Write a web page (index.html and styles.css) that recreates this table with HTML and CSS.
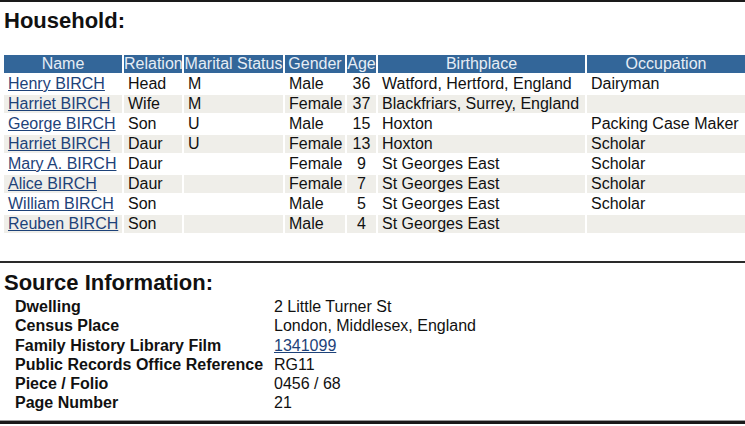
FILE: index.html
```html
<!DOCTYPE html>
<html>
<head>
<meta charset="utf-8">
<link rel="stylesheet" href="styles.css">
</head>
<body>
<div class="page">
  <div class="top-rule"></div>
  <h2 class="section-title">Household:</h2>
  <table class="household">
    <colgroup>
      <col class="c-name"><col class="c-rel"><col class="c-mar"><col class="c-gen"><col class="c-age"><col class="c-birth"><col class="c-occ">
    </colgroup>
    <thead>
      <tr><th>Name</th><th>Relation</th><th>Marital Status</th><th>Gender</th><th>Age</th><th>Birthplace</th><th>Occupation</th></tr>
    </thead>
    <tbody>
      <tr><td><a href="#">Henry BIRCH</a></td><td>Head</td><td>M</td><td>Male</td><td class="age">36</td><td>Watford, Hertford, England</td><td>Dairyman</td></tr>
      <tr class="alt"><td><a href="#">Harriet BIRCH</a></td><td>Wife</td><td>M</td><td>Female</td><td class="age">37</td><td>Blackfriars, Surrey, England</td><td></td></tr>
      <tr><td><a href="#">George BIRCH</a></td><td>Son</td><td>U</td><td>Male</td><td class="age">15</td><td>Hoxton</td><td>Packing Case Maker</td></tr>
      <tr class="alt"><td><a href="#">Harriet BIRCH</a></td><td>Daur</td><td>U</td><td>Female</td><td class="age">13</td><td>Hoxton</td><td>Scholar</td></tr>
      <tr><td><a href="#">Mary A. BIRCH</a></td><td>Daur</td><td></td><td>Female</td><td class="age">9</td><td>St Georges East</td><td>Scholar</td></tr>
      <tr class="alt"><td><a href="#">Alice BIRCH</a></td><td>Daur</td><td></td><td>Female</td><td class="age">7</td><td>St Georges East</td><td>Scholar</td></tr>
      <tr><td><a href="#">William BIRCH</a></td><td>Son</td><td></td><td>Male</td><td class="age">5</td><td>St Georges East</td><td>Scholar</td></tr>
      <tr class="alt"><td><a href="#">Reuben BIRCH</a></td><td>Son</td><td></td><td>Male</td><td class="age">4</td><td>St Georges East</td><td></td></tr>
    </tbody>
  </table>
  <div class="mid-rule"></div>
  <h2 class="section-title source-title">Source Information:</h2>
  <dl class="source">
    <dt>Dwelling</dt><dd>2 Little Turner St</dd>
    <dt>Census Place</dt><dd>London, Middlesex, England</dd>
    <dt>Family History Library Film</dt><dd><a href="#">1341099</a></dd>
    <dt>Public Records Office Reference</dt><dd>RG11</dd>
    <dt>Piece / Folio</dt><dd>0456 / 68</dd>
    <dt>Page Number</dt><dd>21</dd>
  </dl>
  <div class="bottom-rule"></div>
</div>
</body>
</html>
```

FILE: styles.css
```css
html, body {
  margin: 0;
  padding: 0;
  background: #ffffff;
  overflow: hidden;
}
body {
  font-family: "Liberation Sans", Arial, sans-serif;
  font-size: 16px;
  color: #111;
  width: 745px;
  height: 426px;
}
.page {
  width: 745px;
}
.top-rule {
  height: 2px;
  background: #1a1a1a;
}
.section-title {
  margin: 6px 0 0 4px;
  font-size: 22px;
  line-height: 26px;
  font-weight: bold;
  color: #111;
}
.household {
  margin: 19px 0 0 2px;
  width: 745px;
  table-layout: fixed;
  border-collapse: separate;
  border-spacing: 2px;
}
.c-name { width: 118px; }
.c-rel { width: 58px; }
.c-mar { width: 99px; }
.c-gen { width: 60px; }
.c-age { width: 29px; }
.c-birth { width: 207px; }
.c-occ { width: 158px; }
.household th {
  background: #336699;
  color: #e6edf5;
  font-weight: normal;
  text-align: center;
  height: 18px;
  line-height: 18px;
  padding: 0;
  white-space: nowrap;
  overflow: hidden;
}
.household td {
  height: 18px;
  line-height: 18px;
  padding: 0 0 0 4px;
  white-space: nowrap;
  overflow: hidden;
  text-align: left;
}
.household td.age {
  padding: 0;
  text-align: center;
}
.household tr.alt td {
  background: #efeee9;
}
a {
  color: #1d4279;
  text-decoration: underline;
}
.mid-rule {
  margin-top: 26px;
  height: 2px;
  background: #2a2a2a;
}
.source-title {
  margin-top: 7px;
}
.source {
  margin: 1px 0 0 0;
  padding-left: 15px;
  display: grid;
  grid-template-columns: 259px 1fr;
  grid-auto-rows: 19.3px;
  line-height: 19.3px;
}
.source dt {
  font-weight: bold;
  margin: 0;
}
.source dd {
  margin: 0;
}
.bottom-rule {
  margin-top: 7px;
  height: 3px;
  background: #1a1a1a;
  border-top: 1px solid #9a9a9a;
}
```
